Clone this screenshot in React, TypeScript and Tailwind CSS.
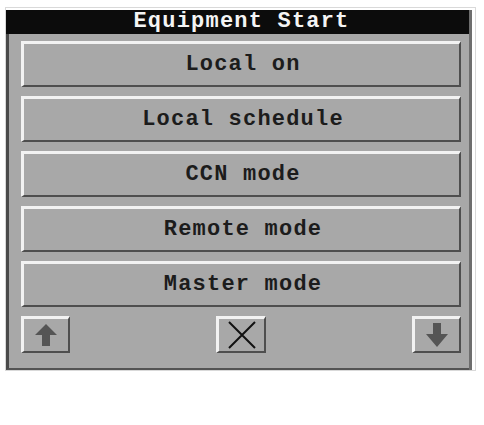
import React from "react";

const items = ["Local on", "Local schedule", "CCN mode", "Remote mode", "Master mode"];

function Btn({ children, className = "" }: { children: React.ReactNode; className?: string }) {
  return (
    <div
      className={
        "flex items-center justify-center bg-[#a8a8a8] border-t-[3px] border-l-[3px] border-t-[#f2f2f2] border-l-[#f2f2f2] border-b-2 border-r-2 border-b-[#4e4e4e] border-r-[#4e4e4e] " +
        className
      }
    >
      {children}
    </div>
  );
}

export default function App() {
  return (
    <div className="w-[484px] h-[425px] bg-white pt-[7px] pl-[5px]" style={{ fontFamily: '"Liberation Mono", monospace' }}>
      <div className="w-[471px] h-[364px] border border-[#d9d9d9] pt-[2px] pr-[3px]">
        <div className="flex flex-col w-[466px] h-[360px] border-r-[3px] border-r-[#6e6e6e]">
          <div className="h-[24px] bg-[#0c0c0c] text-[#f4f4f4] text-[22px] font-bold leading-[24px] text-center tracking-[1.2px] pl-[8px]">
            Equipment Start
          </div>
          <div className="flex-1 bg-[#a8a8a8] border-l-[3px] border-l-[#4a4a4a] border-b-2 border-b-[#545454] pt-[7px] pl-[12px] pr-[8px] flex flex-col">
            <div className="flex flex-col gap-[9px]">
              {items.map((t) => (
                <Btn key={t} className="h-[46px] text-[22px] font-bold text-[#1c1c1c] tracking-[1.2px] pl-[3px] pb-[1px]">
                  {t}
                </Btn>
              ))}
            </div>
            <div className="mt-[9px] flex justify-between items-start">
              <Btn className="w-[49px] h-[37px]">
                <svg width="24" height="22" viewBox="0 0 24 22">
                  <path d="M12 0 L23 11 L16 11 L16 22 L8 22 L8 11 L1 11 Z" fill="#555" />
                </svg>
              </Btn>
              <Btn className="w-[50px] h-[37px] ml-[146px]">
                <svg width="30" height="28" viewBox="0 0 30 28">
                  <path d="M2 1 L28 27 M28 1 L2 27" stroke="#111" strokeWidth="2" />
                </svg>
              </Btn>
              <div className="flex-1" />
              <Btn className="w-[49px] h-[37px]">
                <svg width="24" height="24" viewBox="0 0 24 24">
                  <path d="M8 0 L16 0 L16 11 L23 11 L12 24 L1 11 L8 11 Z" fill="#555" />
                </svg>
              </Btn>
            </div>
          </div>
        </div>
      </div>
    </div>
  );
}
